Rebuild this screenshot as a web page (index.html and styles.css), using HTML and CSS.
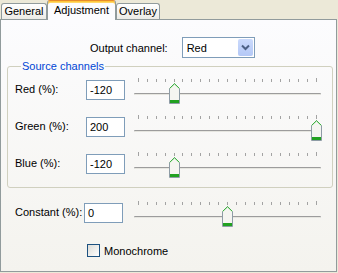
FILE: index.html
```html
<!DOCTYPE html>
<html lang="en">
<head>
    <meta charset="UTF-8">
    <title>Adjustment</title>
    <link rel="stylesheet" href="styles.css">
</head>
<body>
<div class="tabs">
    <div class="tab tab-general">General</div>
    <div class="tab tab-adjust active">Adjustment</div>
    <div class="tab tab-overlay">Overlay</div>
</div>
<div class="page">
    <div class="output-row">
        <span class="output-label">Output channel:</span>
        <div class="combo">
            <span class="combo-text">Red</span>
            <span class="combo-btn">
                <svg width="15" height="17" viewBox="0 0 15 17"><path d="M4 6.5 L7.5 10 L11 6.5" fill="none" stroke="#4d6185" stroke-width="2"/></svg>
            </span>
        </div>
    </div>

    <fieldset class="group">
        <legend>Source channels</legend>

        <div class="row">
            <span class="row-label">Red (%):</span>
            <div class="field">-120</div>
            <div class="slider">
                <div class="ticks"><i></i><i></i><i></i><i></i><i></i><i></i><i></i><i></i><i></i><i></i><i></i><i></i><i></i><i></i><i></i><i></i><i></i><i></i><i></i><i></i><i></i></div>
                <div class="track"></div>
                <span class="thumb" style="left:35px">
                    <svg width="11" height="21" viewBox="0 0 11 21"><path d="M0.5 5.5 L5.5 0.5 L10.5 5.5 V20.5 H0.5Z" fill="#f5f5f1" stroke="#8e9ca6"/><path d="M0.8 5.3 L5.5 0.8 L10.2 5.3" fill="none" stroke="#2fb62f"/><rect x="1" y="17" width="9" height="3" fill="#21a121"/></svg>
                </span>
            </div>
        </div>

        <div class="row">
            <span class="row-label">Green (%):</span>
            <div class="field">200</div>
            <div class="slider">
                <div class="ticks"><i></i><i></i><i></i><i></i><i></i><i></i><i></i><i></i><i></i><i></i><i></i><i></i><i></i><i></i><i></i><i></i><i></i><i></i><i></i><i></i><i></i></div>
                <div class="track"></div>
                <span class="thumb" style="left:177px">
                    <svg width="11" height="21" viewBox="0 0 11 21"><path d="M0.5 5.5 L5.5 0.5 L10.5 5.5 V20.5 H0.5Z" fill="#f5f5f1" stroke="#8e9ca6"/><path d="M0.8 5.3 L5.5 0.8 L10.2 5.3" fill="none" stroke="#2fb62f"/><rect x="1" y="17" width="9" height="3" fill="#21a121"/></svg>
                </span>
            </div>
        </div>

        <div class="row">
            <span class="row-label">Blue (%):</span>
            <div class="field">-120</div>
            <div class="slider">
                <div class="ticks"><i></i><i></i><i></i><i></i><i></i><i></i><i></i><i></i><i></i><i></i><i></i><i></i><i></i><i></i><i></i><i></i><i></i><i></i><i></i><i></i><i></i></div>
                <div class="track"></div>
                <span class="thumb" style="left:35px">
                    <svg width="11" height="21" viewBox="0 0 11 21"><path d="M0.5 5.5 L5.5 0.5 L10.5 5.5 V20.5 H0.5Z" fill="#f5f5f1" stroke="#8e9ca6"/><path d="M0.8 5.3 L5.5 0.8 L10.2 5.3" fill="none" stroke="#2fb62f"/><rect x="1" y="17" width="9" height="3" fill="#21a121"/></svg>
                </span>
            </div>
        </div>
    </fieldset>

    <div class="row row-constant">
        <span class="row-label">Constant (%):</span>
        <div class="field">0</div>
        <div class="slider">
            <div class="ticks"><i></i><i></i><i></i><i></i><i></i><i></i><i></i><i></i><i></i><i></i><i></i><i></i><i></i><i></i><i></i><i></i><i></i><i></i><i></i><i></i><i></i></div>
            <div class="track"></div>
            <span class="thumb" style="left:88px">
                <svg width="11" height="21" viewBox="0 0 11 21"><path d="M0.5 5.5 L5.5 0.5 L10.5 5.5 V20.5 H0.5Z" fill="#f5f5f1" stroke="#8e9ca6"/><path d="M0.8 5.3 L5.5 0.8 L10.2 5.3" fill="none" stroke="#2fb62f"/><rect x="1" y="17" width="9" height="3" fill="#21a121"/></svg>
            </span>
        </div>
    </div>

    <label class="check">
        <span class="check-box"></span>
        <span>Monochrome</span>
    </label>
</div>
</body>
</html>
```

FILE: styles.css
```css
/* page */
body{
    margin:0;
    width:338px;
    height:273px;
    overflow:hidden;
    background:#ece9d8;
    font-family:"Liberation Sans", Arial, sans-serif;
    font-size:11px;
    color:#000;
}

/* tab strip */
.tabs{
    display:flex;
    align-items:flex-end;
    height:19px;
    padding-left:1px;
    position:relative;
    z-index:1;
}
.tab{
    box-sizing:border-box;
    height:16px;
    line-height:14px;
    text-align:center;
    border:1px solid #919b9c;
    border-bottom:none;
    border-radius:3px 3px 0 0;
    background:linear-gradient(#ffffff, #ecebe6);
}
.tab-general{ width:46px; }
.tab-adjust{ width:69px; }
.tab-overlay{ width:44px; }
.tab.active{
    height:20px;
    margin-bottom:-1px;
    line-height:14px;
    border-top:1px solid #e68b2c;
    box-shadow:inset 0 1px 0 #ffc83c, inset 0 2px 0 #ffd86a;
    background:#fcfcfe;
    padding-top:2px;
}

/* tab page */
.page{
    box-sizing:border-box;
    width:337px;
    height:253px;
    border:1px solid #919b9c;
    background:linear-gradient(#fcfcfe, #f4f3ee);
    padding-top:17px;
}

/* output channel */
.output-row{
    display:flex;
    align-items:center;
    gap:14px;
    padding-left:89px;
    height:21px;
}
.combo{
    box-sizing:border-box;
    width:73px;
    height:21px;
    border:1px solid #7f9db9;
    background:#fff;
    display:flex;
    align-items:center;
    justify-content:space-between;
    padding:1px;
}
.combo-text{ padding-left:3px; }
.combo-btn{
    width:15px;
    height:17px;
    border-radius:2px;
    background:linear-gradient(#cbdafc, #b4c8f6);
    display:flex;
}

/* group box */
.group{
    margin:2px 3px 0 6px;
    padding:5px 0 9px 7px;
    border:1px solid #d0d0bf;
    border-radius:3px;
    display:flex;
    flex-direction:column;
    gap:11px;
}
.group legend{
    margin-left:6px;
    padding:0 1px;
    color:#0046d5;
    line-height:13px;
}

/* rows */
.row{
    display:flex;
    align-items:flex-start;
    height:26px;
}
.row-label{
    width:71px;
    margin-top:5px;
}
.field{
    box-sizing:border-box;
    width:39px;
    height:20px;
    margin-top:2px;
    border:1px solid #7f9db9;
    background:#fff;
    padding:2px 3px;
    line-height:14px;
}
.row .slider{ margin-left:9px; }

.row-constant{
    margin-top:13px;
    padding-left:14px;
}
.row-constant .row-label{ width:69px; }
.row-constant .slider{ margin-left:11px; }

/* trackbar */
.slider{
    position:relative;
    width:187px;
    height:26px;
}
.ticks{
    display:flex;
    justify-content:space-between;
    width:179px;
    height:4px;
    margin-left:4px;
    align-items:flex-end;
}
.ticks i{
    width:1px;
    height:3px;
    background:#a3a3a3;
}
.ticks i:first-child,
.ticks i:last-child{ height:4px; }
.track{
    margin-top:11px;
    height:1px;
    background:#9c9c9c;
    border-bottom:1px solid #e6e6e0;
    border-radius:1px;
}
.thumb{
    position:absolute;
    top:5px;
    width:11px;
    height:21px;
    display:block;
}
.thumb svg{ display:block; }

/* checkbox */
.check{
    display:flex;
    align-items:center;
    gap:4px;
    margin:17px 0 0 86px;
}
.check-box{
    box-sizing:border-box;
    width:13px;
    height:13px;
    border:1px solid #1c5180;
    background:linear-gradient(135deg, #dcdcd7, #ffffff);
}
```
